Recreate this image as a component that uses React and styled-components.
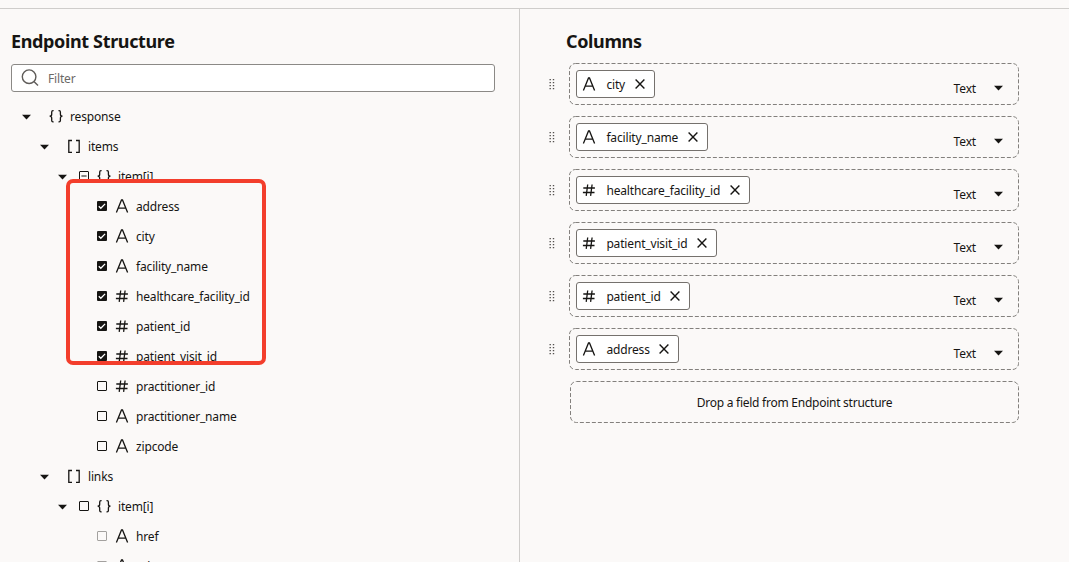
import React from "react";
import styled, { createGlobalStyle } from "styled-components";

const Global = createGlobalStyle`
  * { box-sizing: border-box; }
  body { margin: 0; background: #fbf9f8; color: #161513; overflow: hidden;
    font-family: "Noto Sans", "Open Sans", sans-serif; font-size: 12px; }
`;
const Page = styled.div`
  position: relative; width: 1069px; height: 562px; overflow: hidden;
  padding-top: 8px; display: flex;
`;
const Panels = styled.div`
  flex: 1; display: flex; border-top: 1px solid #cfcdcb; height: 554px;
`;
const LeftPanel = styled.section`
  width: 520px; border-right: 1px solid #cfcdcb; padding: 19px 24px 0 11px;
`;
const RightPanel = styled.section`
  flex: 1; padding: 19px 50px 0 46px;
`;
const Heading = styled.h2`
  margin: 0; height: 26px; line-height: 26px; font-size: 18px; font-weight: 700;
  letter-spacing: -0.36px; white-space: nowrap;
`;
const FilterField = styled.label`
  display: flex; align-items: center; height: 28px; margin-top: 10px;
  padding-left: 9px; gap: 9px; background: #fff; border: 1px solid #8b8986; border-radius: 3px;
  color: #6b6966; line-height: 26px;
`;
const Tree = styled.div`
  margin-top: 10px; height: 460px; overflow: hidden;
`;
const TreeRow = styled.div`
  display: flex; align-items: center; height: 30px;
  padding-left: ${(p) => 11 + p.$level * 18}px;
`;
const ArrowSlot = styled.span`
  display: flex; width: 9px; margin: 0 12px 1px 0;
`;
const Check = styled.span`
  display: flex; width: 10px; height: 10px; margin: 0 8px 2px 0;
`;
const IconSlot = styled.span`
  display: flex; width: 14px; margin: 0 7px 2px ${(p) => (p.$checked ? 0 : 6)}px;
`;
const Label = styled.span`
  line-height: 18px; white-space: nowrap; letter-spacing: ${(p) => p.$spacing || "-0.16px"};
`;
const FilterText = styled(Label)`
  padding-top: 2px;
`;
const Highlight = styled.div`
  position: absolute; left: 66px; top: 179px; width: 200px; height: 186px;
  border: 4px solid #f33e2c; border-radius: 7px;
`;
const ColumnList = styled.div`
  display: flex; flex-direction: column; gap: 11px; margin-top: 9px; padding-left: 3px;
`;
const ColumnRow = styled.div`
  position: relative; display: flex; align-items: center; justify-content: space-between;
  height: 42px; padding: 0 16px 0 7px;
`;
const DashedFrame = styled.svg`
  position: absolute; inset: 0; width: 100%; height: 100%;
  rect { fill: none; stroke: #83807d; stroke-dasharray: 4 2; }
`;
const Handle = styled.svg`
  position: absolute; left: -20px; top: 16px;
`;
const Chip = styled.div`
  position: relative; display: flex; align-items: center; height: 28px; padding: 0 9px 0 5px;
  background: #fff; border: 1px solid #75716d; border-radius: 3px;
`;
const ChipLabel = styled(Label)`
  margin: 2px 9.5px 0 10.4px;
`;
const TypeSelect = styled.div`
  position: relative; display: flex; align-items: center; gap: 18px; padding-top: 9px;
  svg { margin-bottom: 1px; }
`;
const DropZone = styled(ColumnRow)`
  justify-content: center; margin-left: 1px; padding: 1px 0 0;
`;

const Arrow = () => (
  <svg width="9" height="6" viewBox="0 0 9 6"><path d="M0 .7h9L4.5 5.4z" fill="#161513" /></svg>
);
const Search = () => (
  <svg width="18" height="18" viewBox="0 0 18 18" fill="none" stroke="#5f5c59" strokeWidth="1.4">
    <circle cx="8.1" cy="7.7" r="6.8" /><path d="M12.9 12.5l4.1 4.1" />
  </svg>
);
const Close = () => (
  <svg width="10" height="10" viewBox="0 0 10 10" stroke="#161513" strokeWidth="1.4"><path d="M.6.6l8.8 8.8M9.4.6L.6 9.4" /></svg>
);
const typePaths = {
  text: "M1.4 13.5L6.5 1h1L12.6 13.5M3.3 9.2h7.4",
  number: "M5.7 1.5l-1.5 11.3M10.1 1.5l-1.5 11.3M1.3 5h11.6M.9 9.5h11.6",
  object: "M4.6 1.6H4Q2.7 1.6 2.7 3V5.2Q2.7 7.2.6 7.2Q2.7 7.2 2.7 9.2v2.2Q2.7 12.8 4 12.8h.6M9.5 1.6h.6q1.3 0 1.3 1.4v2.2q0 2 2.1 2q-2.1 0-2.1 2v2.2q0 1.4-1.3 1.4h-.6",
  array: "M5 1.5H1.8v11.9H5M9 1.5h3.2v11.9H9",
};
const TypeIcon = ({ type }) => (
  <svg width="14" height="14" viewBox="0 0 14 14" fill="none" stroke="#161513" strokeWidth="1.3"><path d={typePaths[type]} /></svg>
);
const CheckBox = ({ state }) => (
  <svg width="10" height="10" viewBox="0 0 10 10" fill="none">
    {state === "on" ? <rect width="10" height="10" rx="1" fill="#161513" /> :
      <rect x=".5" y=".5" width="9" height="9" rx=".5" stroke={state === "disabled" ? "#a3a19f" : "#161513"} />}
    {state === "on" && <path d="M1.8 5.3l2 2 4.3-4.4" stroke="#fff" strokeWidth="1.3" />}
    {state === "mixed" && <path d="M2.4 5h5.2" stroke="#161513" />}
  </svg>
);

const nodes = [
  [0, true, null, "object", "response"],
  [1, true, null, "array", "items"],
  [2, true, "mixed", "object", "item[i]"],
  [3, false, "on", "text", "address"],
  [3, false, "on", "text", "city"],
  [3, false, "on", "text", "facility_name"],
  [3, false, "on", "number", "healthcare_facility_id"],
  [3, false, "on", "number", "patient_id"],
  [3, false, "on", "number", "patient_visit_id"],
  [3, false, "off", "number", "practitioner_id"],
  [3, false, "off", "text", "practitioner_name"],
  [3, false, "off", "text", "zipcode"],
  [1, true, null, "array", "links"],
  [2, true, "off", "object", "item[i]"],
  [3, false, "disabled", "text", "href"],
  [3, false, "disabled", "text", "rel"],
];
const columns = [
  ["text", "city"],
  ["text", "facility_name"],
  ["number", "healthcare_facility_id"],
  ["number", "patient_visit_id"],
  ["number", "patient_id"],
  ["text", "address"],
];

const Frame = () => (
  <DashedFrame><rect x=".5" y=".5" width="calc(100% - 1px)" height="41" rx="6" /></DashedFrame>
);

export default function App() {
  return (
    <Page>
      <Global />
      <Panels>
        <LeftPanel>
          <Heading>Endpoint Structure</Heading>
          <FilterField><Search /><FilterText>Filter</FilterText></FilterField>
          <Tree>
            {nodes.map(([level, open, check, type, label], i) => (
              <TreeRow key={i} $level={level}>
                <ArrowSlot>{open && <Arrow />}</ArrowSlot>
                {check && <Check><CheckBox state={check} /></Check>}
                <IconSlot $checked={!!check}><TypeIcon type={type} /></IconSlot>
                <Label>{label}</Label>
              </TreeRow>
            ))}
          </Tree>
        </LeftPanel>
        <RightPanel>
          <Heading>Columns</Heading>
          <ColumnList>
            {columns.map(([type, label]) => (
              <ColumnRow key={label}>
                <Frame />
                <Handle width="6" height="11" viewBox="0 0 6 11" fill="#55524f">
                  {[0, 3, 6, 9].map((y) => <path key={y} d={`M.5 ${y}h1.4v1.3H.5zM3.8 ${y}h1.4v1.3H3.8z`} />)}
                </Handle>
                <Chip><TypeIcon type={type} /><ChipLabel>{label}</ChipLabel><Close /></Chip>
                <TypeSelect><Label>Text</Label><Arrow /></TypeSelect>
              </ColumnRow>
            ))}
            <DropZone><Frame /><Label $spacing="-0.25px">Drop a field from Endpoint structure</Label></DropZone>
          </ColumnList>
        </RightPanel>
      </Panels>
      <Highlight />
    </Page>
  );
}
